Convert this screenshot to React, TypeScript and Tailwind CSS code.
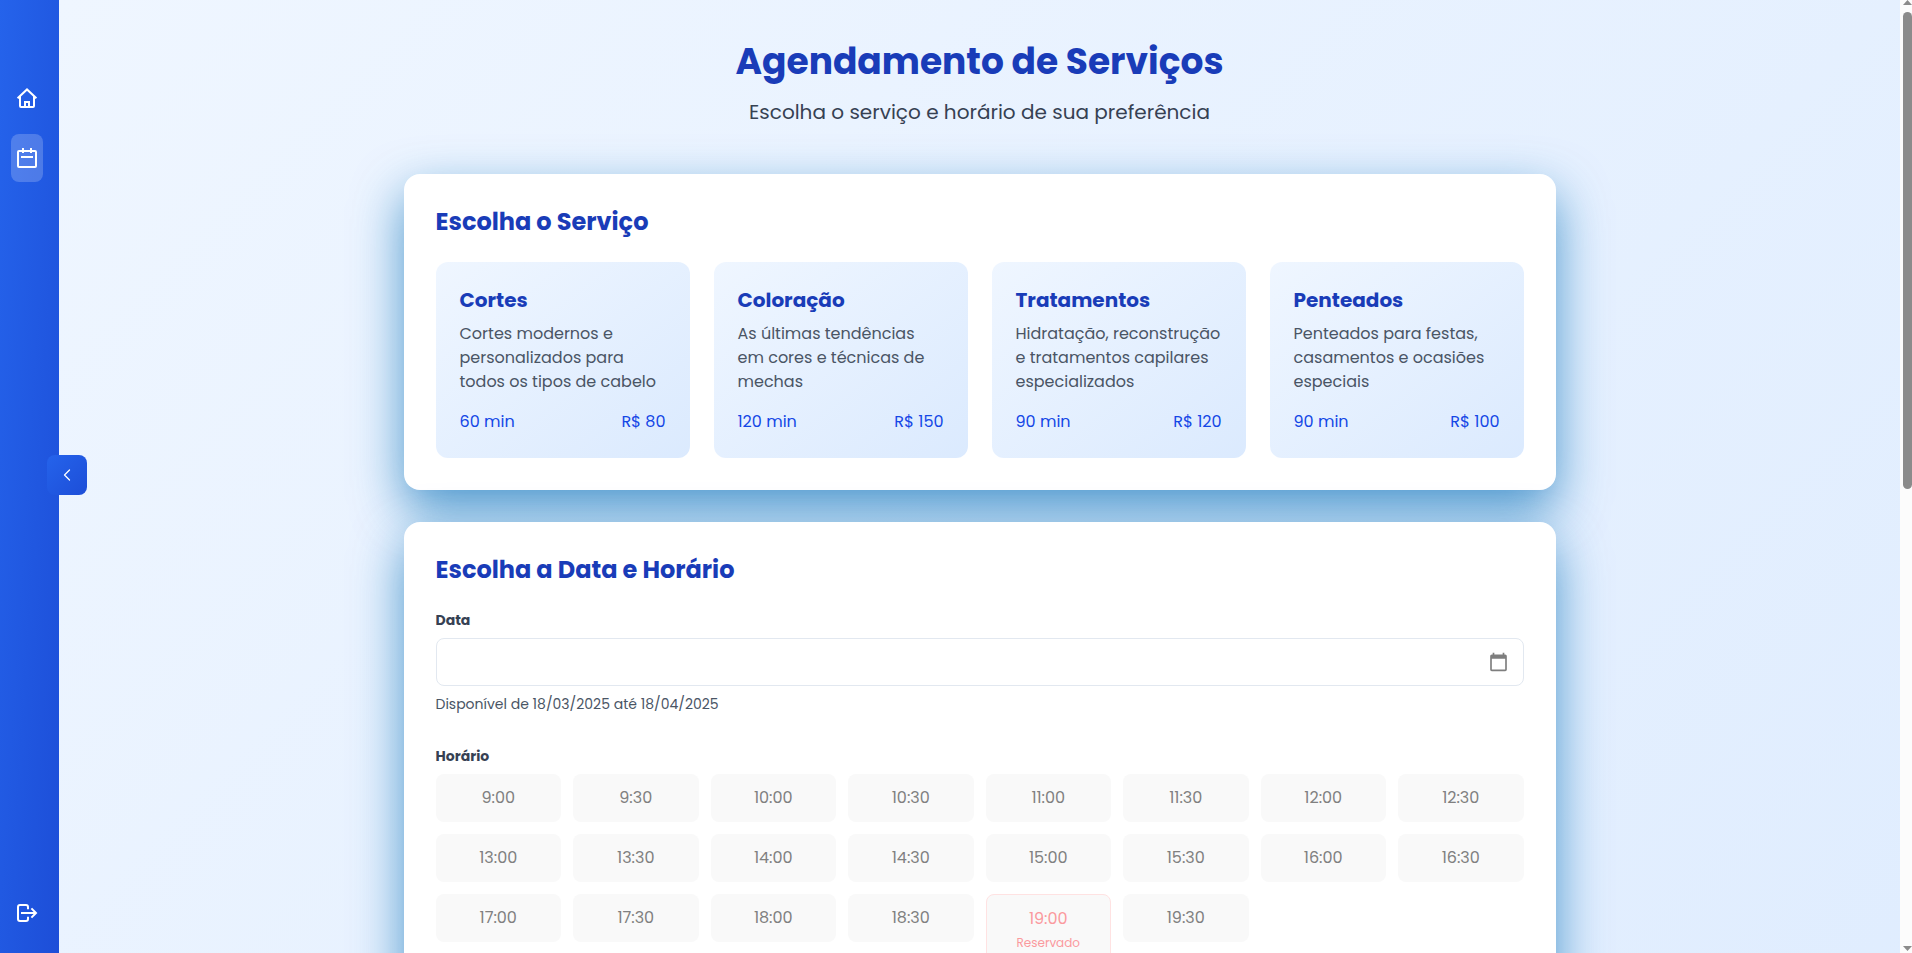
import type { ReactNode } from "react";
import { ChevronLeft } from "lucide-react";

type Service = { name: string; description: string; minutes: number; price: number };

const services: Service[] = [
  { name: "Cortes", description: "Cortes modernos e personalizados para todos os tipos de cabelo", minutes: 60, price: 80 },
  { name: "Coloração", description: "As últimas tendências em cores e técnicas de mechas", minutes: 120, price: 150 },
  { name: "Tratamentos", description: "Hidratação, reconstrução e tratamentos capilares especializados", minutes: 90, price: 120 },
  { name: "Penteados", description: "Penteados para festas, casamentos e ocasiões especiais", minutes: 90, price: 100 },
];

const slots: string[] = [
  "9:00", "9:30", "10:00", "10:30", "11:00", "11:30", "12:00", "12:30",
  "13:00", "13:30", "14:00", "14:30", "15:00", "15:30", "16:00", "16:30",
  "17:00", "17:30", "18:00", "18:30", "19:00", "19:30",
];

const reserved = new Set(["19:00"]);

const cardClass = "rounded-2xl bg-white p-8 shadow-[0_20px_50px_rgba(8,112,184,0.7)]";
const headingClass = "mb-6 text-2xl leading-8 font-bold text-[#193cb8]";
const labelClass = "mb-2 block text-sm font-bold text-[#364153]";
const navItemClass = "flex h-12 w-8 items-center justify-center rounded-lg";

function Icon({ children }: { children: ReactNode }) {
  return (
    <svg viewBox="0 0 24 24" fill="none" stroke="currentColor" strokeWidth={2} className="size-6 shrink-0" aria-hidden="true">
      {children}
    </svg>
  );
}

function HomeIcon() {
  return (
    <Icon>
      <path d="M2.6 12.2 12 3.4l9.4 8.8" />
      <path d="M5 10v10a1 1 0 0 0 1 1h12a1 1 0 0 0 1-1V10" />
      <path d="M10 21v-5h4v5" />
    </Icon>
  );
}

function CalendarIcon() {
  return (
    <Icon>
      <rect x="3" y="5" width="18" height="16" rx="1" />
      <path d="M8 2v5M16 2v5M6 11h12" />
    </Icon>
  );
}

function LogOutIcon() {
  return (
    <Icon>
      <path d="M13 8.3V6a2 2 0 0 0-2-2H5a2 2 0 0 0-2 2v12a2 2 0 0 0 2 2h6a2 2 0 0 0 2-2v-2.3" />
      <path d="M6 12h15M16.4 7.4 21 12l-4.6 4.6" />
    </Icon>
  );
}

function Sidebar() {
  return (
    <aside className="relative z-10 flex w-[59px] shrink-0 flex-col justify-between bg-linear-to-br from-[#2563eb] to-[#1d4ed8] pt-[74px] pb-4 pl-[11px] text-white">
      <nav className="flex flex-col gap-3">
        <a href="#inicio" aria-label="Início" className={navItemClass}>
          <HomeIcon />
        </a>
        <a href="#agendamento" aria-label="Agendamento" className={`${navItemClass} bg-white/20`}>
          <CalendarIcon />
        </a>
      </nav>
      <button type="button" aria-label="Sair" className={navItemClass}>
        <LogOutIcon />
      </button>
      <button
        type="button"
        aria-label="Recolher menu"
        className="absolute top-1/2 -right-7 -mt-[22px] flex size-10 items-center justify-center rounded-lg bg-linear-to-br from-[#2563eb] to-[#1d4ed8]"
      >
        <ChevronLeft className="size-5" strokeWidth={1.5} />
      </button>
    </aside>
  );
}

function ServiceCard({ service }: { service: Service }) {
  return (
    <button type="button" className="rounded-xl bg-linear-to-br from-[#eff6ff] to-[#dbeafe] p-6 text-left">
      <h3 className="mb-2 text-xl leading-7 font-bold text-[#193cb8]">{service.name}</h3>
      <p className="mb-4 min-h-[72px] leading-6 text-[#4a5565]">{service.description}</p>
      <div className="flex justify-between leading-6 text-[#1447e6]">
        <span>{service.minutes} min</span>
        <span>R$ {service.price}</span>
      </div>
    </button>
  );
}

function Slot({ time }: { time: string }) {
  if (reserved.has(time)) {
    return (
      <button type="button" disabled className="rounded-lg border border-[#ffe2e2] bg-[#f9f9f9] px-4 py-3 leading-6 text-[#fb9a9e]">
        {time}
        <span className="mt-1 block text-xs">Reservado</span>
      </button>
    );
  }
  return (
    <button type="button" disabled className="self-start rounded-lg bg-[#f9f9f9] px-4 py-3 leading-6 text-[#808080]">
      {time}
    </button>
  );
}

function ScrollTrack() {
  return (
    <div aria-hidden="true" className="flex w-3 shrink-0 flex-col items-end bg-[#fcfcfc]">
      <svg viewBox="0 0 9 12" className="h-3 w-[9px]">
        <path d="M0 5 L4.5 0 L9 5 Z" fill="#8b8b8b" />
      </svg>
      <div className="h-1/2 w-[9px] rounded-full bg-[#8b8b8b]" />
      <svg viewBox="0 0 9 12" className="mt-auto h-3 w-[9px]">
        <path d="M0 5 L4.5 10 L9 5 Z" fill="#8b8b8b" />
      </svg>
    </div>
  );
}

export default function App() {
  return (
    <div className="flex h-screen overflow-hidden font-[Poppins,Inter,sans-serif] text-base">
      <Sidebar />
      <main className="flex-1 overflow-hidden">
        <div className="min-h-[195vh] bg-linear-to-br from-[#eff6ff] to-[#dbeafe] px-6 py-[42px]">
          <header className="mb-12 text-center">
            <h1 className="mb-4 text-4xl leading-10 font-bold text-[#193cb8]">Agendamento de Serviços</h1>
            <p className="text-xl leading-7 text-[#364153]">Escolha o serviço e horário de sua preferência</p>
          </header>
          <div className="mx-auto flex max-w-6xl flex-col gap-8">
            <section className={cardClass}>
              <h2 className={headingClass}>Escolha o Serviço</h2>
              <div className="grid grid-cols-4 gap-6">
                {services.map((service) => (
                  <ServiceCard key={service.name} service={service} />
                ))}
              </div>
            </section>
            <section className={cardClass}>
              <h2 className={headingClass}>Escolha a Data e Horário</h2>
              <div className="mb-8">
                <label htmlFor="date" className={labelClass}>Data</label>
                <input
                  id="date"
                  type="date"
                  min="2025-03-18"
                  max="2025-04-18"
                  className="h-12 w-full rounded-lg border border-[#e2e8f0] px-3.5 [&::-webkit-calendar-picker-indicator]:size-[21px] [&::-webkit-calendar-picker-indicator]:bg-contain [&::-webkit-calendar-picker-indicator]:p-0 [&::-webkit-calendar-picker-indicator]:opacity-50 [&::-webkit-datetime-edit]:opacity-0"
                />
                <p className="mt-2 text-sm text-[#4a5565]">Disponível de 18/03/2025 até 18/04/2025</p>
              </div>
              <h3 className={labelClass}>Horário</h3>
              <div className="grid grid-cols-8 gap-3">
                {slots.map((time) => (
                  <Slot key={time} time={time} />
                ))}
              </div>
            </section>
          </div>
        </div>
      </main>
      <ScrollTrack />
    </div>
  );
}
